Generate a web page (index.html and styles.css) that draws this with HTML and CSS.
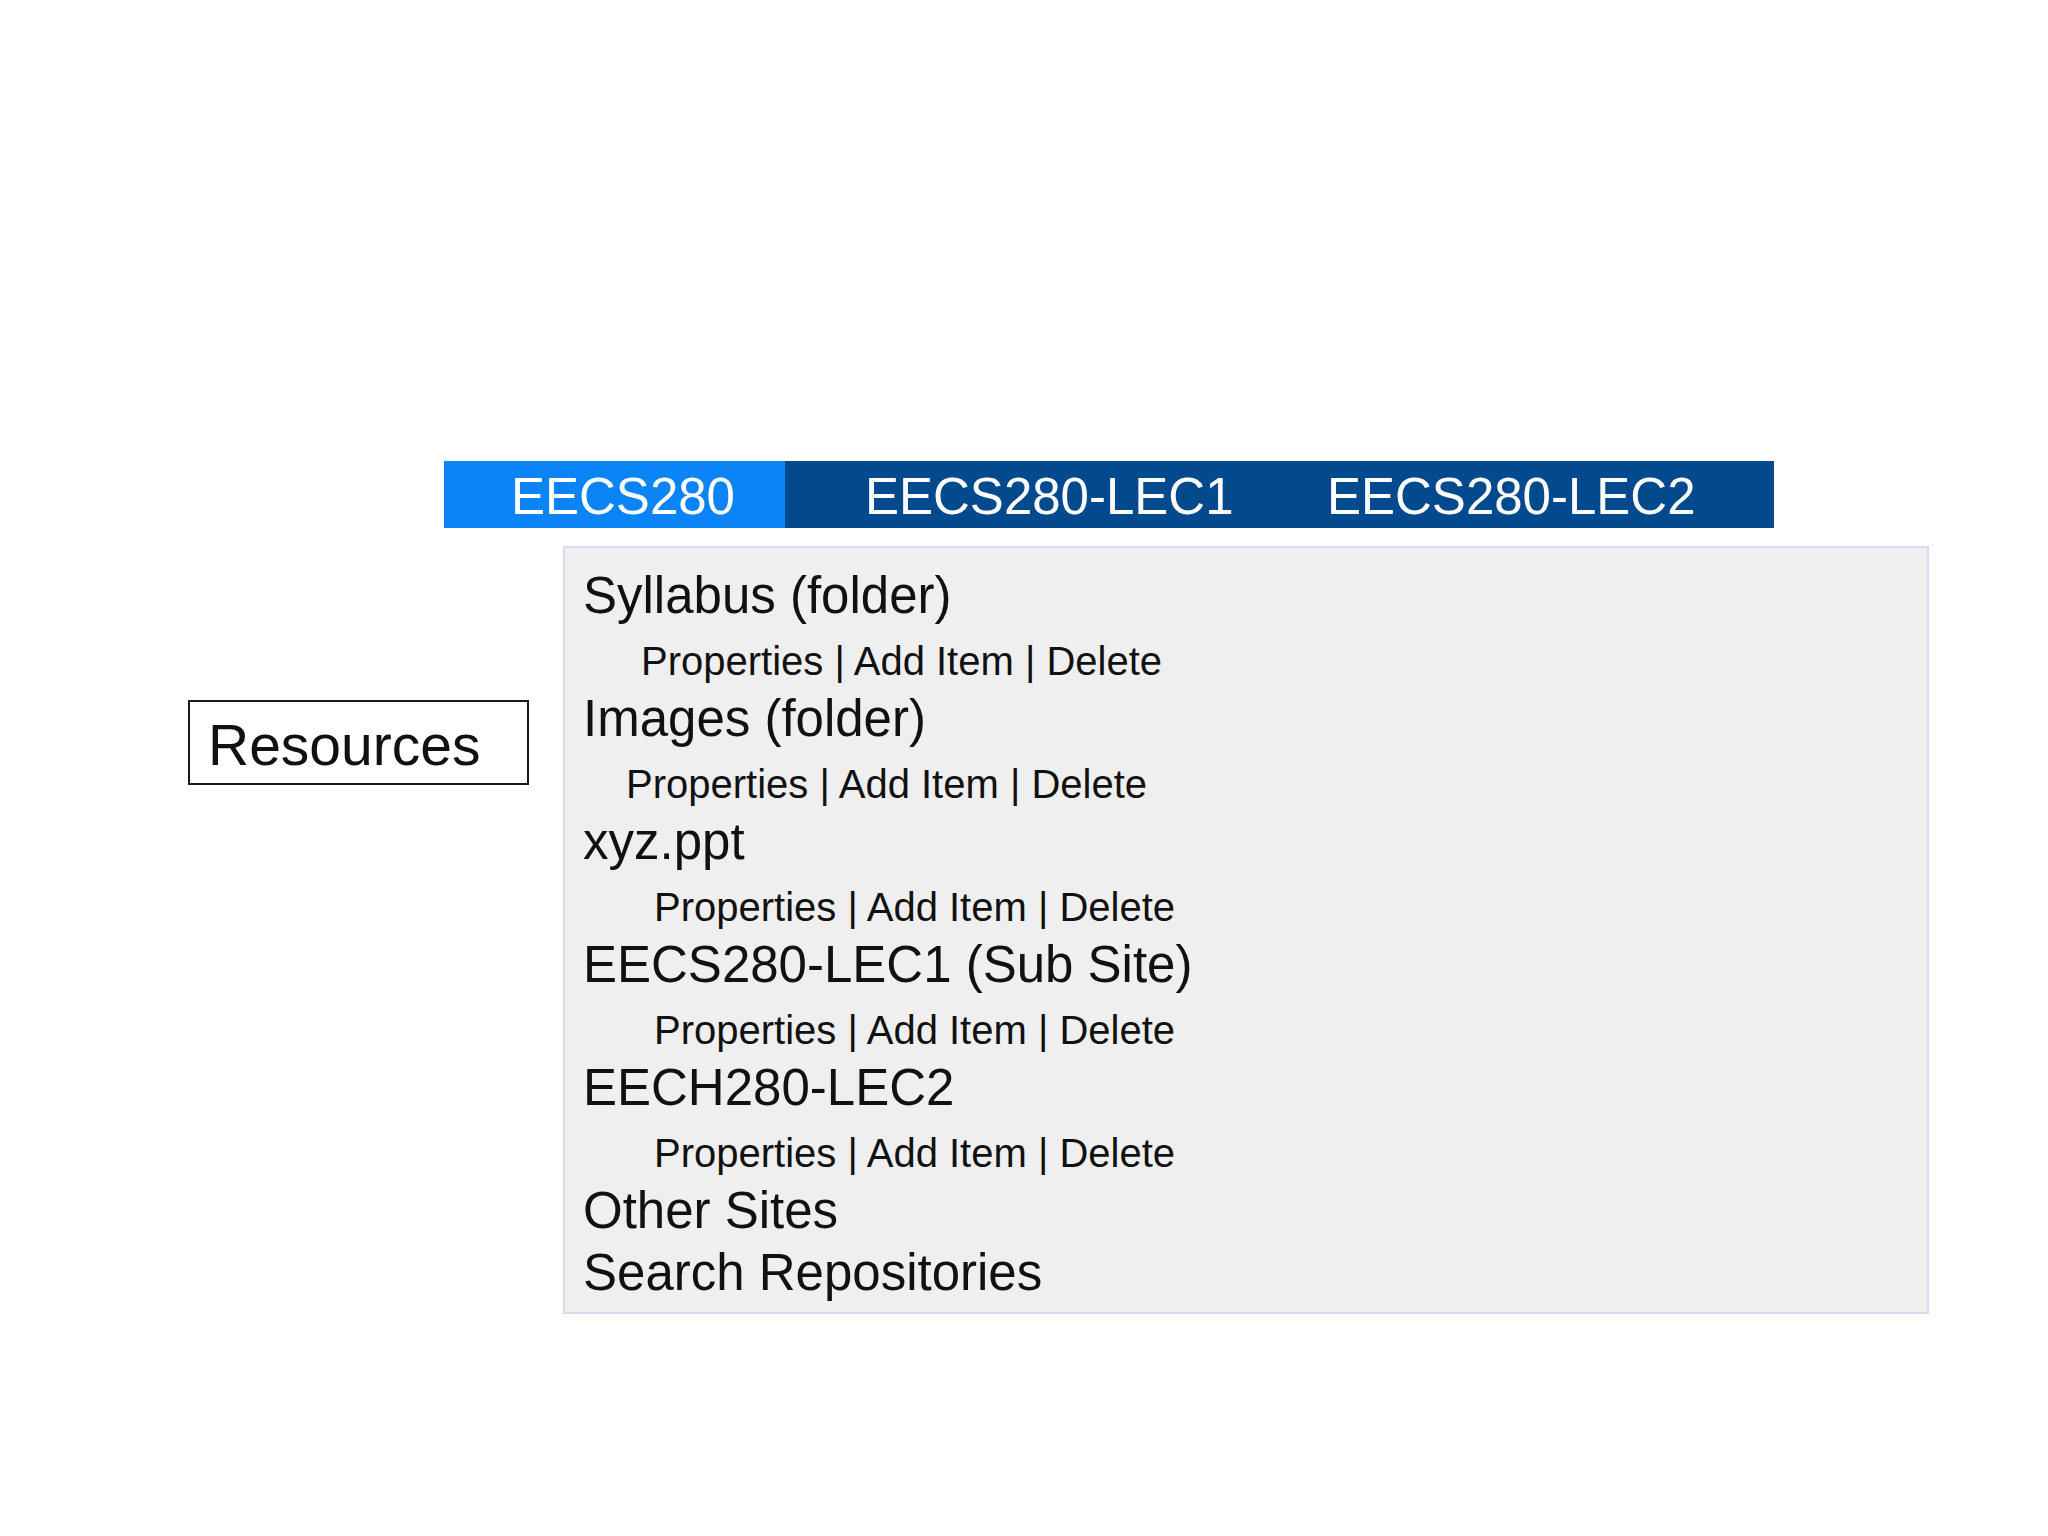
FILE: index.html
```html
<!DOCTYPE html>
<html lang="en">
<head>
<meta charset="utf-8">
<title>Resources</title>
<link rel="stylesheet" href="styles.css">
</head>
<body>
<div class="page">
  <nav class="tabs">
    <div class="tab tab-active">EECS280</div>
    <div class="tab tab-lec1">EECS280-LEC1</div>
    <div class="tab tab-lec2">EECS280-LEC2</div>
  </nav>
  <div class="main">
    <div class="side">Resources</div>
    <div class="panel">
      <div class="title">Syllabus (folder)</div>
      <div class="props ind-a">Properties | Add Item | Delete</div>
      <div class="title">Images (folder)</div>
      <div class="props ind-b">Properties | Add Item | Delete</div>
      <div class="title">xyz.ppt</div>
      <div class="props ind-c">Properties | Add Item | Delete</div>
      <div class="title">EECS280-LEC1 (Sub Site)</div>
      <div class="props ind-c">Properties | Add Item | Delete</div>
      <div class="title">EECH280-LEC2</div>
      <div class="props ind-c">Properties | Add Item | Delete</div>
      <div class="title">Other Sites</div>
      <div class="title">Search Repositories</div>
    </div>
  </div>
</div>
</body>
</html>
```

FILE: styles.css
```css
html, body {
  margin: 0;
  padding: 0;
  background: #ffffff;
}

body {
  font-family: "Liberation Sans", Arial, sans-serif;
  color: #111111;
}

.page {
  padding-top: 461px;
}

.tabs {
  display: flex;
  margin-left: 444px;
  width: 1330px;
  height: 67px;
  background: #03498d;
}

.tab {
  color: #ffffff;
  font-size: 51px;
  line-height: 63px;
  padding-top: 4px;
  white-space: nowrap;
  box-sizing: border-box;
}

.tab-active {
  background: #0a84f6;
  width: 341px;
  padding-left: 67px;
}

.tab-lec1 {
  width: 480px;
  padding-left: 80px;
}

.tab-lec2 {
  flex: 1;
  padding-left: 62px;
}

.main {
  display: flex;
  align-items: flex-start;
  margin-top: 18px;
}

.side {
  margin-left: 188px;
  margin-top: 154px;
  width: 341px;
  height: 85px;
  box-sizing: border-box;
  border: 2px solid #1a1a1a;
  padding: 6px 0 0 18px;
  font-size: 57px;
  line-height: 75px;
  white-space: nowrap;
}

.panel {
  margin-left: 34px;
  width: 1366px;
  box-sizing: border-box;
  border: 2px solid #dadaf0;
  background: #efefef;
  padding: 17px 0 9px 18px;
}

.title {
  font-size: 51px;
  line-height: 61.5px;
  white-space: nowrap;
}

.props {
  font-size: 40px;
  line-height: 54px;
  padding-top: 7.5px;
  white-space: nowrap;
}

.ind-a {
  padding-left: 58px;
}

.ind-b {
  padding-left: 43px;
}

.ind-c {
  padding-left: 71px;
}
```
